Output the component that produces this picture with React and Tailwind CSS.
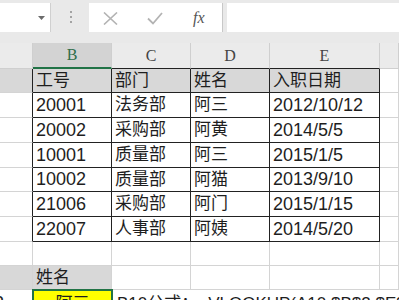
import React from 'react'

const COLS = ['w-[33px]', 'w-[79px]', 'w-[79px]', 'w-[79px]', 'w-[110px]', 'flex-1']
const CELL_FONT = { fontFamily: '"Liberation Sans", "Noto Sans CJK SC", sans-serif' }

const rows = [
  ['20001', '法务部', '阿三', '2012/10/12'],
  ['20002', '采购部', '阿黄', '2014/5/5'],
  ['10001', '质量部', '阿三', '2015/1/5'],
  ['10002', '质量部', '阿猫', '2013/9/10'],
  ['21006', '采购部', '阿门', '2015/1/15'],
  ['22007', '人事部', '阿姨', '2014/5/20'],
]
const rowHeights = ['h-[25px]', 'h-[25px]', 'h-[25px]', 'h-[24px]', 'h-[25px]', 'h-[25px]']

const isCjk = (s) => /[\u4e00-\u9fff]/.test(s)

function Toolbar() {
  return (
    <div className="h-[43px] bg-[#e9e9e9] flex items-start pt-[3px]">
      {/* Name box */}
      <div className="w-[51px] shrink-0 h-[29px] bg-white border-r border-[#d0d0d0] relative">
        <svg className="absolute left-[38px] top-[13px]" width="7" height="4" viewBox="0 0 7 4">
          <path d="M0 0h7L3.5 4z" fill="#6b6b6b" />
        </svg>
      </div>
      {/* Grip dots */}
      <div className="w-[38px] shrink-0 h-[29px] flex flex-col items-center pt-[8px] gap-[3px] pl-[1px]">
        <span className="w-[2px] h-[2px] bg-[#a3a3a3]" />
        <span className="w-[2px] h-[2px] bg-[#a3a3a3]" />
        <span className="w-[2px] h-[2px] bg-[#a3a3a3]" />
      </div>
      {/* Cancel / enter / fx */}
      <div className="w-[134px] shrink-0 h-[29px] bg-white border-r border-[#c8c8c8] relative">
        <svg className="absolute left-[14px] top-[9px]" width="15" height="13" viewBox="0 0 15 13">
          <path d="M1 0.5l13 12M14 0.5l-13 12" stroke="#b3b3b3" strokeWidth="1.6" fill="none" />
        </svg>
        <svg className="absolute left-[58px] top-[9px]" width="16" height="13" viewBox="0 0 16 13">
          <path d="M1 6.5l5 5L15 1" stroke="#b3b3b3" strokeWidth="1.8" fill="none" />
        </svg>
        <span
          className="absolute left-[104px] top-[3px] text-[16px] italic text-[#555]"
          style={{ fontFamily: '"Liberation Serif", serif' }}
        >
          fx
        </span>
      </div>
      <div className="w-[4px] shrink-0" />
      {/* Formula input */}
      <div className="flex-1 h-[29px] bg-white" />
    </div>
  )
}

function ColumnHeaders() {
  const letters = ['', 'B', 'C', 'D', 'E', '']
  return (
    <div className="flex h-[26px] bg-[#ebebeb]" style={{ fontFamily: '"Liberation Serif", serif' }}>
      {letters.map((l, i) => {
        const selected = l === 'B'
        const table = i >= 1 && i <= 4
        return (
          <div
            key={i}
            className={`${COLS[i]} shrink-0 flex items-center justify-center text-[16px] border-r border-[#cfcfcf] ${
              selected
                ? 'bg-[#d3d3d3] text-[#2f6e4b] border-b-2 border-b-[#217346]'
                : table
                ? 'text-[#444] border-b border-b-[#222]'
                : 'border-b border-b-[#cfcfcf]'
            }`}
          >
            {l}
          </div>
        )
      })}
    </div>
  )
}

function Cell({ i, children, className = '', right = 'border-r-[#d4d4d4]', bottom = 'border-b-[#d4d4d4]' }) {
  const cjk = typeof children === 'string' && isCjk(children)
  return (
    <div
      className={`${COLS[i]} shrink-0 flex items-center pl-[3px] border-r border-b whitespace-nowrap text-[#1e1e1e] ${right} ${bottom} ${
        cjk ? 'text-[17px]' : 'text-[18px]'
      } ${className}`}
    >
      {children}
    </div>
  )
}

function TableRow({ values, h, head }) {
  const fill = head ? 'bg-[#d8d8d8]' : ''
  return (
    <div className={`flex ${h}`}>
      <Cell i={0} right="border-r-[#222]" className={fill} />
      {values.map((v, j) => (
        <Cell key={j} i={j + 1} right="border-r-[#222]" bottom="border-b-[#222]" className={fill}>
          {v}
        </Cell>
      ))}
      <Cell i={5} />
    </div>
  )
}

export default function App() {
  return (
    <div className="w-[399px] h-[300px] overflow-hidden bg-white">
      <Toolbar />
      <ColumnHeaders />
      <div style={CELL_FONT}>
        <TableRow values={['工号', '部门', '姓名', '入职日期']} h="h-[24px]" head />
        {rows.map((r, k) => (
          <TableRow key={k} values={r} h={rowHeights[k]} />
        ))}
        {/* empty row */}
        <div className="flex h-[24px]">
          {COLS.map((_, i) => (
            <Cell key={i} i={i} />
          ))}
        </div>
        {/* lookup label row */}
        <div className="flex h-[24px]">
          <Cell i={0} className="bg-[#d8d8d8]" />
          <Cell i={1} className="bg-[#d8d8d8]">姓名</Cell>
          <Cell i={2} />
          <Cell i={3} />
          <Cell i={4} />
          <Cell i={5} />
        </div>
        {/* formula row */}
        <div className="flex h-[25px] items-start">
          <div className={`${COLS[0]} shrink-0 h-full border-r border-[#d4d4d4] overflow-hidden text-[18px] text-[#1e1e1e] leading-[25px] pt-[1px]`}>
            <span className="-ml-[6px]">2</span>
          </div>
          <div className={`${COLS[1]} shrink-0 h-full bg-[#ffff00] relative flex justify-center text-[17px] text-[#1e1e1e] leading-[25px] pt-[1px]`}>
            <div className="absolute -inset-x-[1px] -top-[1px] -bottom-[1px] border-2 border-[#217346]" />
            阿三
          </div>
          <div className="flex-1 min-w-0 h-full whitespace-nowrap text-[17px] text-[#1e1e1e] leading-[25px] pt-[1px] pl-[5px]">
            B10公式：=VLOOKUP(A10,$B$2:$E$7,3,0)
          </div>
        </div>
      </div>
    </div>
  )
}
